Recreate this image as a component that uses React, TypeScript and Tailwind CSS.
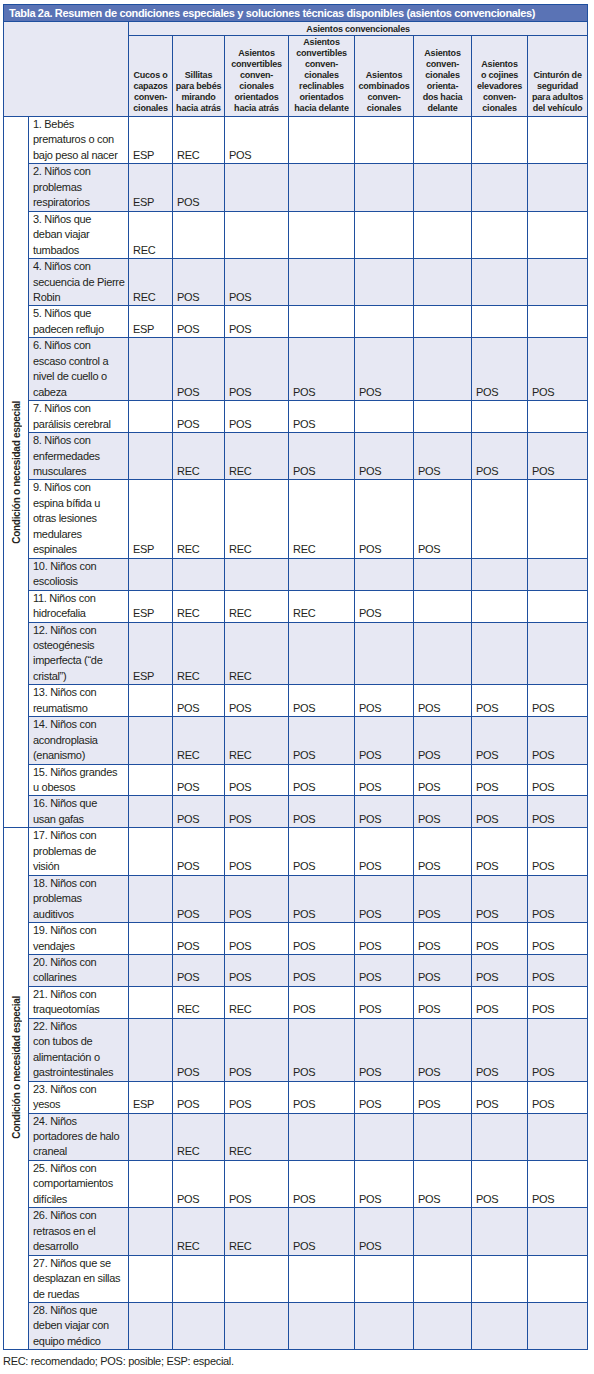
type Row = {
  lines: string[];
  vals: string[];
};

const P = "POS";
const R = "REC";
const E = "ESP";
const _ = "";

const colClasses = [
  "w-[25px]",
  "w-[100px]",
  "w-[44px]",
  "w-[52px]",
  "w-[64px]",
  "w-[66px]",
  "w-[59px]",
  "w-[58px]",
  "w-[56px]",
  "w-[60px]",
];

const headers: string[][] = [
  ["Cucos o", "capazos", "conven-", "cionales"],
  ["Sillitas", "para bebés", "mirando", "hacia atrás"],
  ["Asientos", "convertibles", "conven-", "cionales", "orientados", "hacia atrás"],
  ["Asientos", "convertibles", "conven-", "cionales", "reclinables", "orientados", "hacia delante"],
  ["Asientos", "combinados", "conven-", "cionales"],
  ["Asientos", "conven-", "cionales", "orienta-", "dos hacia", "delante"],
  ["Asientos", "o cojines", "elevadores", "conven-", "cionales"],
  ["Cinturón de", "seguridad", "para adultos", "del vehículo"],
];

const groupA: Row[] = [
  { lines: ["1. Bebés", "prematuros o con", "bajo peso al nacer"], vals: [E, R, P, _, _, _, _, _] },
  { lines: ["2. Niños con", "problemas", "respiratorios"], vals: [E, P, _, _, _, _, _, _] },
  { lines: ["3. Niños que", "deban viajar", "tumbados"], vals: [R, _, _, _, _, _, _, _] },
  { lines: ["4. Niños con", "secuencia de Pierre", "Robin"], vals: [R, P, P, _, _, _, _, _] },
  { lines: ["5. Niños que", "padecen reflujo"], vals: [E, P, P, _, _, _, _, _] },
  { lines: ["6. Niños con", "escaso control a", "nivel de cuello o", "cabeza"], vals: [_, P, P, P, P, _, P, P] },
  { lines: ["7. Niños con", "parálisis cerebral"], vals: [_, P, P, P, _, _, _, _] },
  { lines: ["8. Niños con", "enfermedades", "musculares"], vals: [_, R, R, P, P, P, P, P] },
  { lines: ["9. Niños con", "espina bífida u", "otras lesiones", "medulares", "espinales"], vals: [E, R, R, R, P, P, _, _] },
  { lines: ["10. Niños con", "escoliosis"], vals: [_, _, _, _, _, _, _, _] },
  { lines: ["11. Niños con", "hidrocefalia"], vals: [E, R, R, R, P, _, _, _] },
  { lines: ["12. Niños con", "osteogénesis", "imperfecta (“de", "cristal”)"], vals: [E, R, R, _, _, _, _, _] },
  { lines: ["13. Niños con", "reumatismo"], vals: [_, P, P, P, P, P, P, P] },
  { lines: ["14. Niños con", "acondroplasia", "(enanismo)"], vals: [_, R, R, P, P, P, P, P] },
  { lines: ["15. Niños grandes", "u obesos"], vals: [_, P, P, P, P, P, P, P] },
  { lines: ["16. Niños que", "usan gafas"], vals: [_, P, P, P, P, P, P, P] },
];

const groupB: Row[] = [
  { lines: ["17. Niños con", "problemas de", "visión"], vals: [_, P, P, P, P, P, P, P] },
  { lines: ["18. Niños con", "problemas", "auditivos"], vals: [_, P, P, P, P, P, P, P] },
  { lines: ["19. Niños con", "vendajes"], vals: [_, P, P, P, P, P, P, P] },
  { lines: ["20. Niños con", "collarines"], vals: [_, P, P, P, P, P, P, P] },
  { lines: ["21. Niños con", "traqueotomías"], vals: [_, R, R, P, P, P, P, P] },
  { lines: ["22. Niños", "con tubos de", "alimentación o", "gastrointestinales"], vals: [_, P, P, P, P, P, P, P] },
  { lines: ["23. Niños con", "yesos"], vals: [E, P, P, P, P, P, P, P] },
  { lines: ["24. Niños", "portadores de halo", "craneal"], vals: [_, R, R, _, _, _, _, _] },
  { lines: ["25. Niños con", "comportamientos", "difíciles"], vals: [_, P, P, P, P, P, P, P] },
  { lines: ["26. Niños con", "retrasos en el", "desarrollo"], vals: [_, R, R, P, P, _, _, _] },
  { lines: ["27. Niños que se", "desplazan en sillas", "de ruedas"], vals: [_, _, _, _, _, _, _, _] },
  { lines: ["28. Niños que", "deben viajar con", "equipo médico"], vals: [_, _, _, _, _, _, _, _] },
];

const cell = "border border-[#1f4f9e] p-0";

const GroupLabel = ({ span, shift }: { span: number; shift?: boolean }) => (
  <td
    rowSpan={span}
    className={`${cell} bg-white align-middle ${shift ? "pb-[44px]" : ""}`}
  >
    <div className="flex justify-center pl-[1px]">
      <div className="rotate-180 whitespace-nowrap text-[10px] font-bold leading-[12px] tracking-[-0.3px] [writing-mode:vertical-rl]">
        Condición o necesidad especial
      </div>
    </div>
  </td>
);

const BodyRows = ({ rows, offset, shiftLabel }: { rows: Row[]; offset: number; shiftLabel?: boolean }) => (
  <>
    {rows.map((row, i) => {
      const shaded = (offset + i) % 2 === 1;
      const bg = shaded ? "bg-[#e7e8f3]" : "bg-white";
      return (
        <tr key={row.lines[0]}>
          {i === 0 && <GroupLabel span={rows.length} shift={shiftLabel} />}
          <td className={`${cell} ${bg} pl-[4px] align-top`}>
            {row.lines.map((line) => (
              <div key={line} className="whitespace-nowrap">
                {line}
              </div>
            ))}
          </td>
          {row.vals.map((v, j) => (
            <td key={j} className={`${cell} ${bg} pl-[4px] align-bottom`}>
              {v}
            </td>
          ))}
        </tr>
      );
    })}
  </>
);

export default function App() {
  return (
    <div className="min-h-[1374px] bg-white pl-[3px] pt-[4px] font-['Liberation_Sans',Arial,sans-serif] text-[#231f20]">
      <table className="w-[584px] table-fixed border-collapse text-[11px] leading-[15.46px] tracking-[-0.3px]">
        <colgroup>
          {colClasses.map((c) => (
            <col key={c} className={c} />
          ))}
        </colgroup>
        <thead>
          <tr>
            <td
              colSpan={10}
              className={`${cell} h-[17px] whitespace-nowrap bg-[#5a73b5] pl-[5px] align-middle text-[11px] font-bold leading-[15px] tracking-[-0.35px] text-white`}
            >
              Tabla 2a. Resumen de condiciones especiales y soluciones técnicas disponibles (asientos convencionales)
            </td>
          </tr>
          <tr>
            <td colSpan={2} rowSpan={2} className={`${cell} bg-[#e7e8f3]`} />
            <td
              colSpan={8}
              className={`${cell} h-[14px] bg-[#e7e8f3] text-center align-middle text-[9px] font-bold leading-[12px] tracking-[-0.2px]`}
            >
              Asientos convencionales
            </td>
          </tr>
          <tr>
            {headers.map((h) => (
              <td
                key={h.join(" ")}
                className={`${cell} h-[81px] bg-[#e7e8f3] pb-[2px] text-center align-bottom text-[9px] font-bold leading-[11px] tracking-[-0.2px]`}
              >
                {h.map((line) => (
                  <div key={line} className="whitespace-nowrap">
                    {line}
                  </div>
                ))}
              </td>
            ))}
          </tr>
        </thead>
        <tbody>
          <BodyRows rows={groupA} offset={0} />
          <BodyRows rows={groupB} offset={groupA.length} shiftLabel />
        </tbody>
      </table>
      <p className="mt-[4px] text-[11px] leading-[15px] tracking-[-0.3px]">
        REC: recomendado; POS: posible; ESP: especial.
      </p>
    </div>
  );
}
